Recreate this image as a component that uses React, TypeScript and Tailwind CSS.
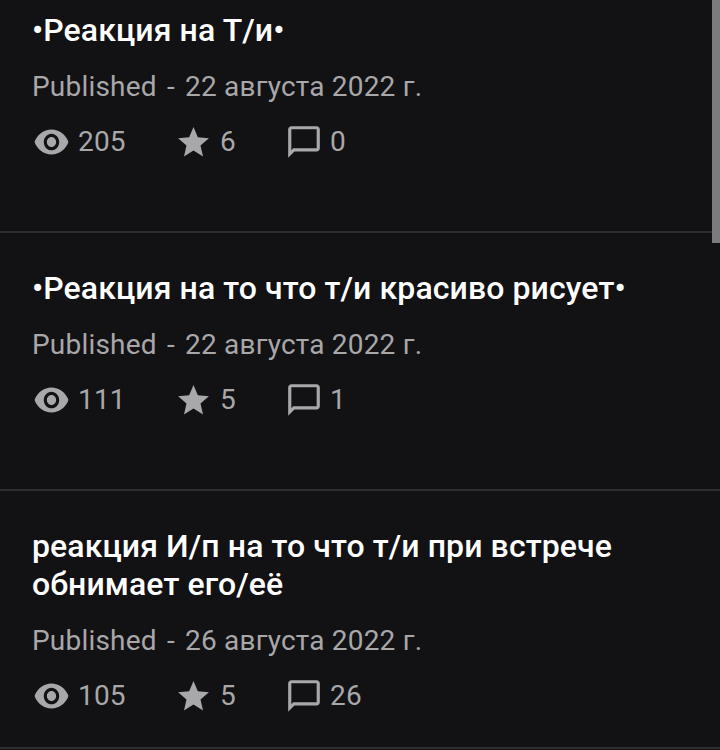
const posts = [
  { title: '•Реакция на Т/и•', date: '22 августа 2022 г.', views: 205, stars: 6, comments: 0 },
  { title: '•Реакция на то что т/и красиво рисует•', date: '22 августа 2022 г.', views: 111, stars: 5, comments: 1 },
  { title: 'реакция И/п на то что т/и при встрече обнимает его/её', date: '26 августа 2022 г.', views: 105, stars: 5, comments: 26 },
]

function EyeIcon() {
  return (
    <svg width="37" height="40" viewBox="0 0 24 24" preserveAspectRatio="none" fill="currentColor" className="shrink-0">
      <path d="M12 4.5C7 4.5 2.73 7.61 1 12c1.73 4.39 6 7.5 11 7.5s9.27-3.11 11-7.5c-1.73-4.39-6-7.5-11-7.5zM12 17c-2.76 0-5-2.24-5-5s2.24-5 5-5 5 2.24 5 5-2.24 5-5 5zm0-8c-1.66 0-3 1.34-3 3s1.34 3 3 3 3-1.34 3-3-1.34-3-3-3z" />
    </svg>
  )
}

function StarIcon() {
  return (
    <svg width="37" height="37" viewBox="0 0 24 24" fill="currentColor" className="shrink-0">
      <path d="M12 17.27 18.18 21l-1.64-7.03L22 9.24l-7.19-.61L12 2 9.19 8.63 2 9.24l5.46 4.73L5.82 21z" />
    </svg>
  )
}

function CommentIcon() {
  return (
    <svg width="38" height="38" viewBox="0 0 24 24" fill="currentColor" className="shrink-0">
      <path d="M20 2H4c-1.1 0-2 .9-2 2v18l4-4h14c1.1 0 2-.9 2-2V4c0-1.1-.9-2-2-2zm0 14H5.17L4 17.17V4h16v12z" />
    </svg>
  )
}

export default function App() {
  return (
    <div className="relative h-[750px] w-[720px] overflow-hidden bg-[#121114] font-['Roboto',sans-serif]">
      <div className="-mt-[25px]">
        {posts.map((post) => (
          <div key={post.title} className="h-[258px] border-b-2 border-[#2e2d30] px-8 pt-[36px]">
            <h2 className="text-[32px] font-medium leading-[38px] tracking-[0.1px] text-white">{post.title}</h2>
            <p className="mt-[19px] text-[28px] leading-[38px] tracking-[0.2px] text-[#a8a7aa]">
              Published <span className="mx-[3px]">-</span> {post.date}
            </p>
            <div className="mt-[17px] flex h-[38px] items-center text-[28px] tracking-[0.2px] text-[#a8a7aa]">
              <div className="flex w-[143px] items-center gap-2 pl-px">
                <EyeIcon />
                <span>{post.views}</span>
              </div>
              <div className="flex w-[110px] items-center gap-2">
                <StarIcon />
                <span>{post.stars}</span>
              </div>
              <div className="flex items-center gap-[7px]">
                <CommentIcon />
                <span>{post.comments}</span>
              </div>
            </div>
          </div>
        ))}
      </div>
      <div className="absolute right-0 top-0 h-[243px] w-2 bg-[#7b7a7c]" />
    </div>
  )
}
